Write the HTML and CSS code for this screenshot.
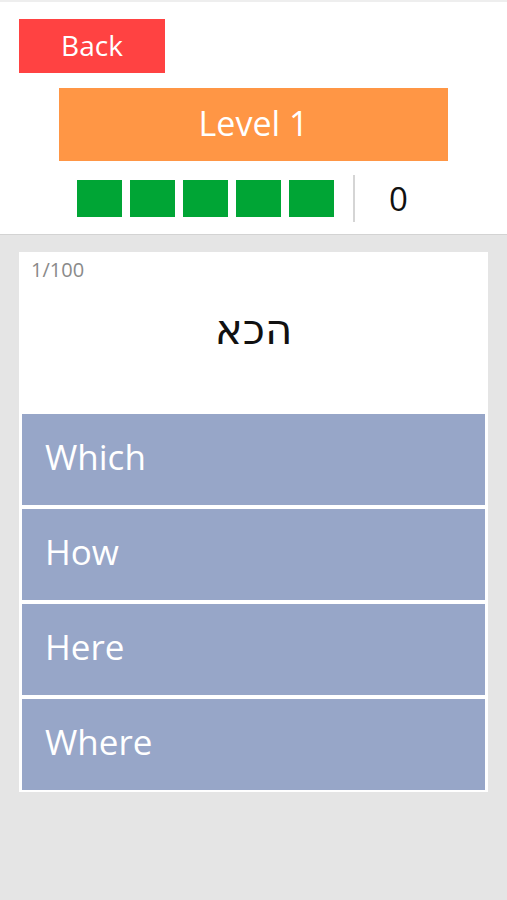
FILE: index.html
```html
<!DOCTYPE HTML>
<html>

<head>
  <meta charset="UTF-8"/>
  <meta name="viewport" content="width=device-width, initial-scale=1.0">
  <title>Quiz</title>

  <link rel="stylesheet" href="styles.css">
</head>

<body>
  <div class="header">
    <div class="back">Back</div>
    <div class="level">Level 1</div>
    <div class="score-row">
      <div class="lives">
        <span class="life"></span>
        <span class="life"></span>
        <span class="life"></span>
        <span class="life"></span>
        <span class="life"></span>
      </div>
      <div class="divider"></div>
      <div class="score">0</div>
    </div>
  </div>

  <div class="card">
    <div class="counter">1/100</div>
    <div class="word" dir="rtl">הכא</div>
    <div class="options">
      <div class="option">Which</div>
      <div class="option">How</div>
      <div class="option">Here</div>
      <div class="option">Where</div>
    </div>
  </div>
</body>

</html>
```

FILE: styles.css
```css
body {
  margin: 0;
  background-color: #E5E5E5;
  font-family: "Open Sans", Roboto, sans-serif;
  height: 900px;
}

.header {
  background-color: #FFF;
  border-top: 2px solid #EEE;
  border-bottom: 1px solid #D3D3D3;
  height: 235px;
  padding: 17px 19px 0 19px;
  box-sizing: border-box;
}

.back {
  width: 146px;
  height: 54px;
  background-color: #FF4242;
  color: #FFF;
  font-size: 28px;
  line-height: 52px;
  text-align: center;
}

.level {
  width: 389px;
  height: 73px;
  margin: 15px 0 0 40px;
  background-color: #FF9645;
  color: #FFF;
  font-size: 34px;
  line-height: 71px;
  text-align: center;
}

.score-row {
  display: flex;
  align-items: center;
  margin: 14px 0 0 58px;
  height: 47px;
}

.lives {
  display: flex;
  gap: 8px;
}

.life {
  display: block;
  width: 45px;
  height: 37px;
  background-color: #00A535;
}

.divider {
  width: 2px;
  height: 47px;
  background-color: #D5D5D5;
  margin-left: 19px;
}

.score {
  font-size: 33px;
  color: #111;
  margin-left: 34px;
}

.card {
  background-color: #FFF;
  margin: 17px 19px 0 19px;
  padding: 6px 3px 2px 3px;
}

.counter {
  color: #8A8A8A;
  font-size: 20px;
  line-height: 24px;
  padding-left: 9px;
}

.word {
  font-family: "DejaVu Sans", sans-serif;
  font-size: 42px;
  color: #111;
  text-align: center;
  line-height: 60px;
  height: 114px;
  padding-top: 18px;
}

.options {
  display: flex;
  flex-direction: column;
  gap: 4px;
}

.option {
  background-color: #97A6C8;
  color: #FFF;
  font-size: 35px;
  height: 91px;
  line-height: 86px;
  padding-left: 23px;
}
```
